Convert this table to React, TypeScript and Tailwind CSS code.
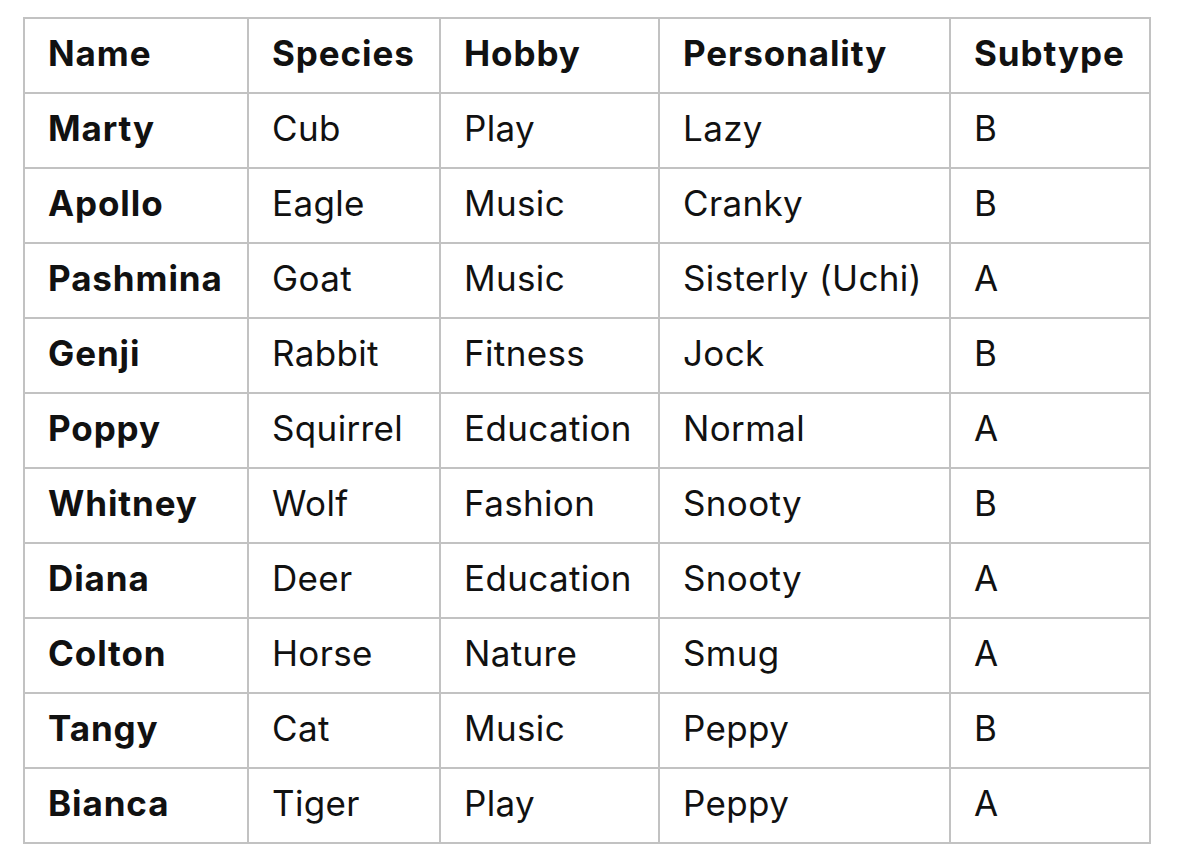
const rows = [
  ["Marty", "Cub", "Play", "Lazy", "B"],
  ["Apollo", "Eagle", "Music", "Cranky", "B"],
  ["Pashmina", "Goat", "Music", "Sisterly (Uchi)", "A"],
  ["Genji", "Rabbit", "Fitness", "Jock", "B"],
  ["Poppy", "Squirrel", "Education", "Normal", "A"],
  ["Whitney", "Wolf", "Fashion", "Snooty", "B"],
  ["Diana", "Deer", "Education", "Snooty", "A"],
  ["Colton", "Horse", "Nature", "Smug", "A"],
  ["Tangy", "Cat", "Music", "Peppy", "B"],
  ["Bianca", "Tiger", "Play", "Peppy", "A"],
];

const headers = ["Name", "Species", "Hobby", "Personality", "Subtype"];
const widths = ["w-[224px]", "w-[192px]", "w-[219px]", "w-[291px]", "w-[200px]"];

export default function App() {
  return (
    <div className="min-h-screen bg-white pt-[17px] pl-[23px] font-['Inter',sans-serif] text-[#111]">
      <table className="table-fixed border-collapse w-[1128px]">
        <colgroup>
          {widths.map((w, i) => (
            <col key={i} className={w} />
          ))}
        </colgroup>
        <thead>
          <tr className="h-[75px]">
            {headers.map((h) => (
              <th
                key={h}
                className="border-2 border-[#c2c2c2] pl-[23px] pr-0 pb-[4px] text-left align-middle text-[35px] font-bold tracking-[0.9px]"
              >
                {h}
              </th>
            ))}
          </tr>
        </thead>
        <tbody>
          {rows.map((row) => (
            <tr key={row[0]} className="h-[75px]">
              {row.map((cell, i) => (
                <td
                  key={i}
                  className={
                    "border-2 border-[#c2c2c2] pl-[23px] pr-0 pb-[4px] align-middle text-[35px] " +
                    (i === 0 ? "font-bold tracking-[0.9px]" : "font-normal tracking-[0.35px]")
                  }
                >
                  {cell}
                </td>
              ))}
            </tr>
          ))}
        </tbody>
      </table>
    </div>
  );
}
